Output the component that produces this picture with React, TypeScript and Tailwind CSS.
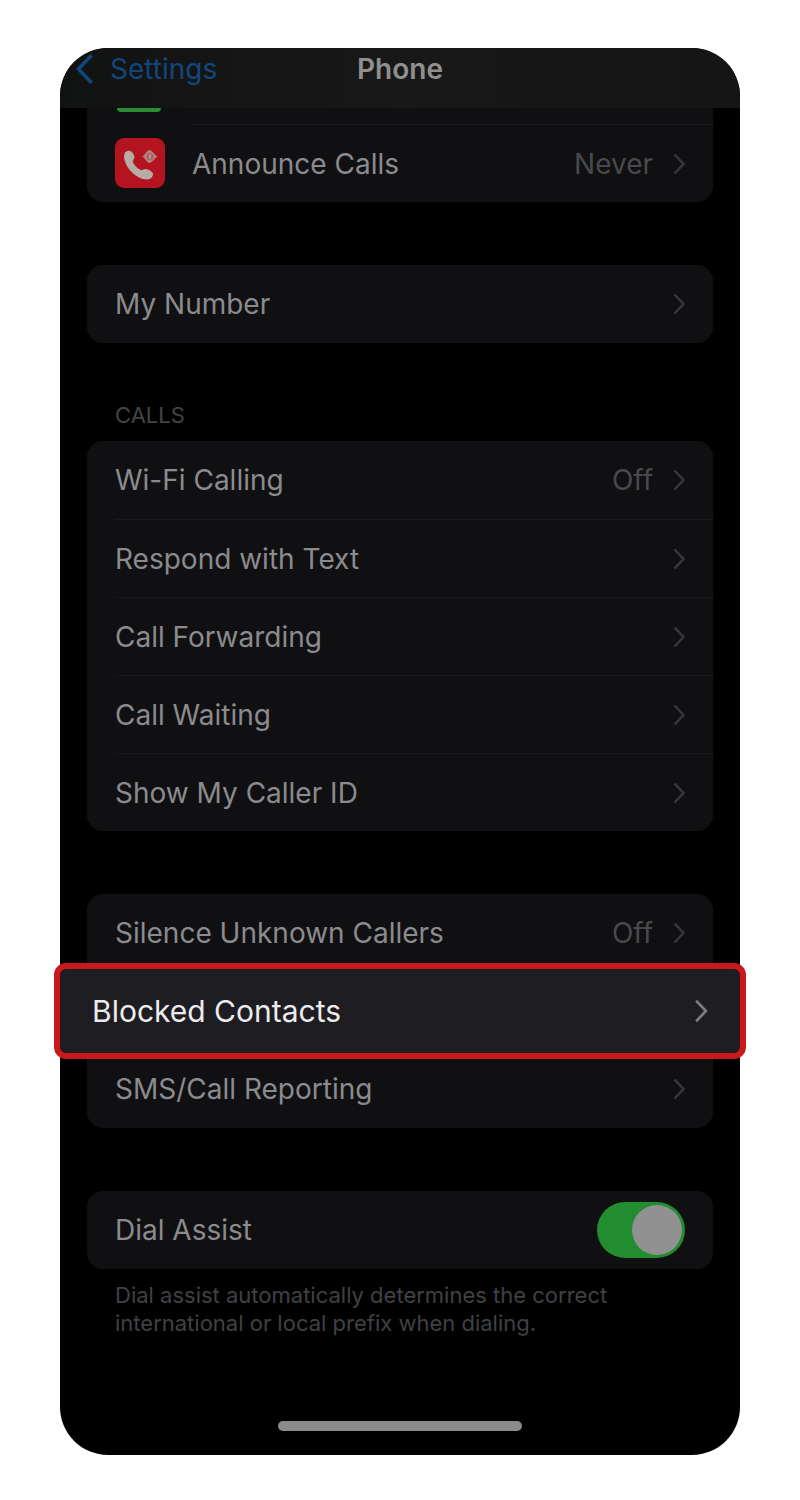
import { useState } from 'react'
import type { ReactNode } from 'react'

type Item = {
  label: string
  value?: string
  highlighted?: boolean
}

const CALLS: Item[] = [
  { label: 'Wi-Fi Calling', value: 'Off' },
  { label: 'Respond with Text' },
  { label: 'Call Forwarding' },
  { label: 'Call Waiting' },
  { label: 'Show My Caller ID' },
]

const BLOCKING: Item[] = [
  { label: 'Silence Unknown Callers', value: 'Off' },
  { label: 'Blocked Contacts', highlighted: true },
  { label: 'SMS/Call Reporting' },
]

function Chevron({ className }: { className: string }) {
  return (
    <svg viewBox="0 0 12 22" fill="none" stroke="currentColor" strokeWidth="2.5" className={className} aria-hidden="true">
      <path d="M1.5 1.5 L10.5 11 L1.5 20.5" />
    </svg>
  )
}

function AnnounceIcon() {
  return (
    <svg viewBox="0 0 50 50" className="h-[50px] w-[50px]" aria-hidden="true">
      <rect width="50" height="50" rx="9" fill="#b4141f" />
      <path
        d="M9.5 15.5 C10.5 13 13.5 12 16 13.2 C18.2 15 19.6 17.6 19.4 19.6 C19.2 21.4 17.4 22.4 17.8 24 C19.2 27.4 22.6 30.6 26 32 C27.6 32.4 28.8 31 30.6 31 C33.4 31.4 37 33.4 38 35.6 C38.4 38.4 36 41.2 32.6 41.6 C27 41.8 20.6 38.4 16.2 33.6 C11.6 28.8 7.8 21 9.5 15.5 Z"
        fill="#b5aca5"
      />
      <path d="M27.5 18.5 C30 17 31 13 34.5 12 C38 13 39.5 17 42.5 18.5 C39.5 20.5 38 24 34.5 25 C31 24 30 20 27.5 18.5 Z" fill="#b5807e" />
      <circle cx="35" cy="18.5" r="3.5" fill="#a86466" />
      <path d="M35 16 v5" stroke="#bd9a98" strokeWidth="1.5" />
    </svg>
  )
}

function Group({ children }: { children: ReactNode }) {
  return <section className="rounded-2xl bg-[#101012]">{children}</section>
}

function Row({ label, value, highlighted, divider }: Item & { divider: boolean }) {
  if (highlighted) {
    return (
      <button
        type="button"
        className="relative z-10 -mx-[33px] -my-[9px] flex h-24 w-[calc(100%+66px)] items-center justify-between rounded-xl border-[6px] border-[#c9191d] bg-[#1e1d22] px-8 text-[30px] text-[#ececee]"
      >
        {label}
        <Chevron className="h-6 w-[14px] text-[#7b7b7f]" />
      </button>
    )
  }
  return (
    <button type="button" className="flex h-[78px] w-full pl-7 text-[28px] text-[#8b8b8d]">
      <span className={`flex h-full flex-1 items-center justify-between pr-7 ${divider ? 'border-t border-[#19191b]' : ''}`}>
        {label}
        <span className="flex items-center gap-5 text-[#49494c]">
          {value}
          <Chevron className="h-[22px] w-3 text-[#38383b]" />
        </span>
      </span>
    </button>
  )
}

function List({ items }: { items: Item[] }) {
  return (
    <Group>
      {items.map((item, index) => (
        <Row key={item.label} {...item} divider={index > 0 && !items[index - 1].highlighted} />
      ))}
    </Group>
  )
}

export default function App() {
  const [dialAssist, setDialAssist] = useState(true)

  return (
    <div className="min-h-screen bg-white px-[60px] py-12 font-['Inter',sans-serif]">
      <main className="rounded-[48px] bg-black pb-6">
        {/* Nav bar */}
        <header className="grid h-[60px] grid-cols-3 overflow-hidden rounded-t-[48px] bg-[#171718] bg-linear-to-r from-[#111312] via-[#181818] to-[#151516] pb-[18px]">
          <a href="#settings" className="flex items-center gap-4 pl-4 text-[28px] text-[#12467c]">
            <Chevron className="h-8 w-[18px] shrink-0 -scale-x-100" />
            Settings
          </a>
          <h1 className="flex items-center justify-center text-[28px] font-semibold text-[#8f8f90]">Phone</h1>
        </header>

        <div className="px-[27px]">
          <section className="rounded-b-2xl bg-[#101012]">
            {/* Bottom edge of the row scrolled under the nav bar */}
            <div className="h-4 pl-[30px]">
              <div className="h-1 w-[44px] rounded-b-full bg-[#2a8c34]" />
            </div>
            <button type="button" className="flex h-[78px] w-full items-center pl-7 text-[28px] text-[#8b8b8d]">
              <AnnounceIcon />
              <span className="ml-[27px] flex h-full flex-1 items-center justify-between border-t border-[#19191b] pr-7">
                Announce Calls
                <span className="flex items-center gap-5 text-[#49494c]">
                  Never
                  <Chevron className="h-[22px] w-3 text-[#38383b]" />
                </span>
              </span>
            </button>
          </section>

          <div className="mt-[63px]">
            <List items={[{ label: 'My Number' }]} />
          </div>

          <h2 className="mt-[58px] mb-3 pl-7 text-[22px] leading-7 text-[#444447]">CALLS</h2>
          <List items={CALLS} />

          <div className="mt-[63px]">
            <List items={BLOCKING} />
          </div>

          <div className="mt-[63px]">
            <Group>
              <div className="flex h-[78px] items-center justify-between px-7 text-[28px] text-[#8b8b8d]">
                <label htmlFor="dial-assist">Dial Assist</label>
                <input
                  id="dial-assist"
                  type="checkbox"
                  checked={dialAssist}
                  onChange={(e) => setDialAssist(e.target.checked)}
                  className="flex h-14 w-[88px] appearance-none items-center rounded-full bg-[#2c2c2e] px-[3px] before:h-[50px] before:w-[50px] before:rounded-full before:bg-[#919191] checked:justify-end checked:bg-[#218c30]"
                />
              </div>
            </Group>
          </div>
          <p className="mt-3 max-w-[580px] pl-7 text-[22px] leading-7 text-[#414144]">
            Dial assist automatically determines the correct international or local prefix when dialing.
          </p>
        </div>

        {/* Home indicator */}
        <div className="mx-auto mt-[84px] h-[10px] w-[244px] rounded-full bg-[#8a8a8a]" />
      </main>
    </div>
  )
}
